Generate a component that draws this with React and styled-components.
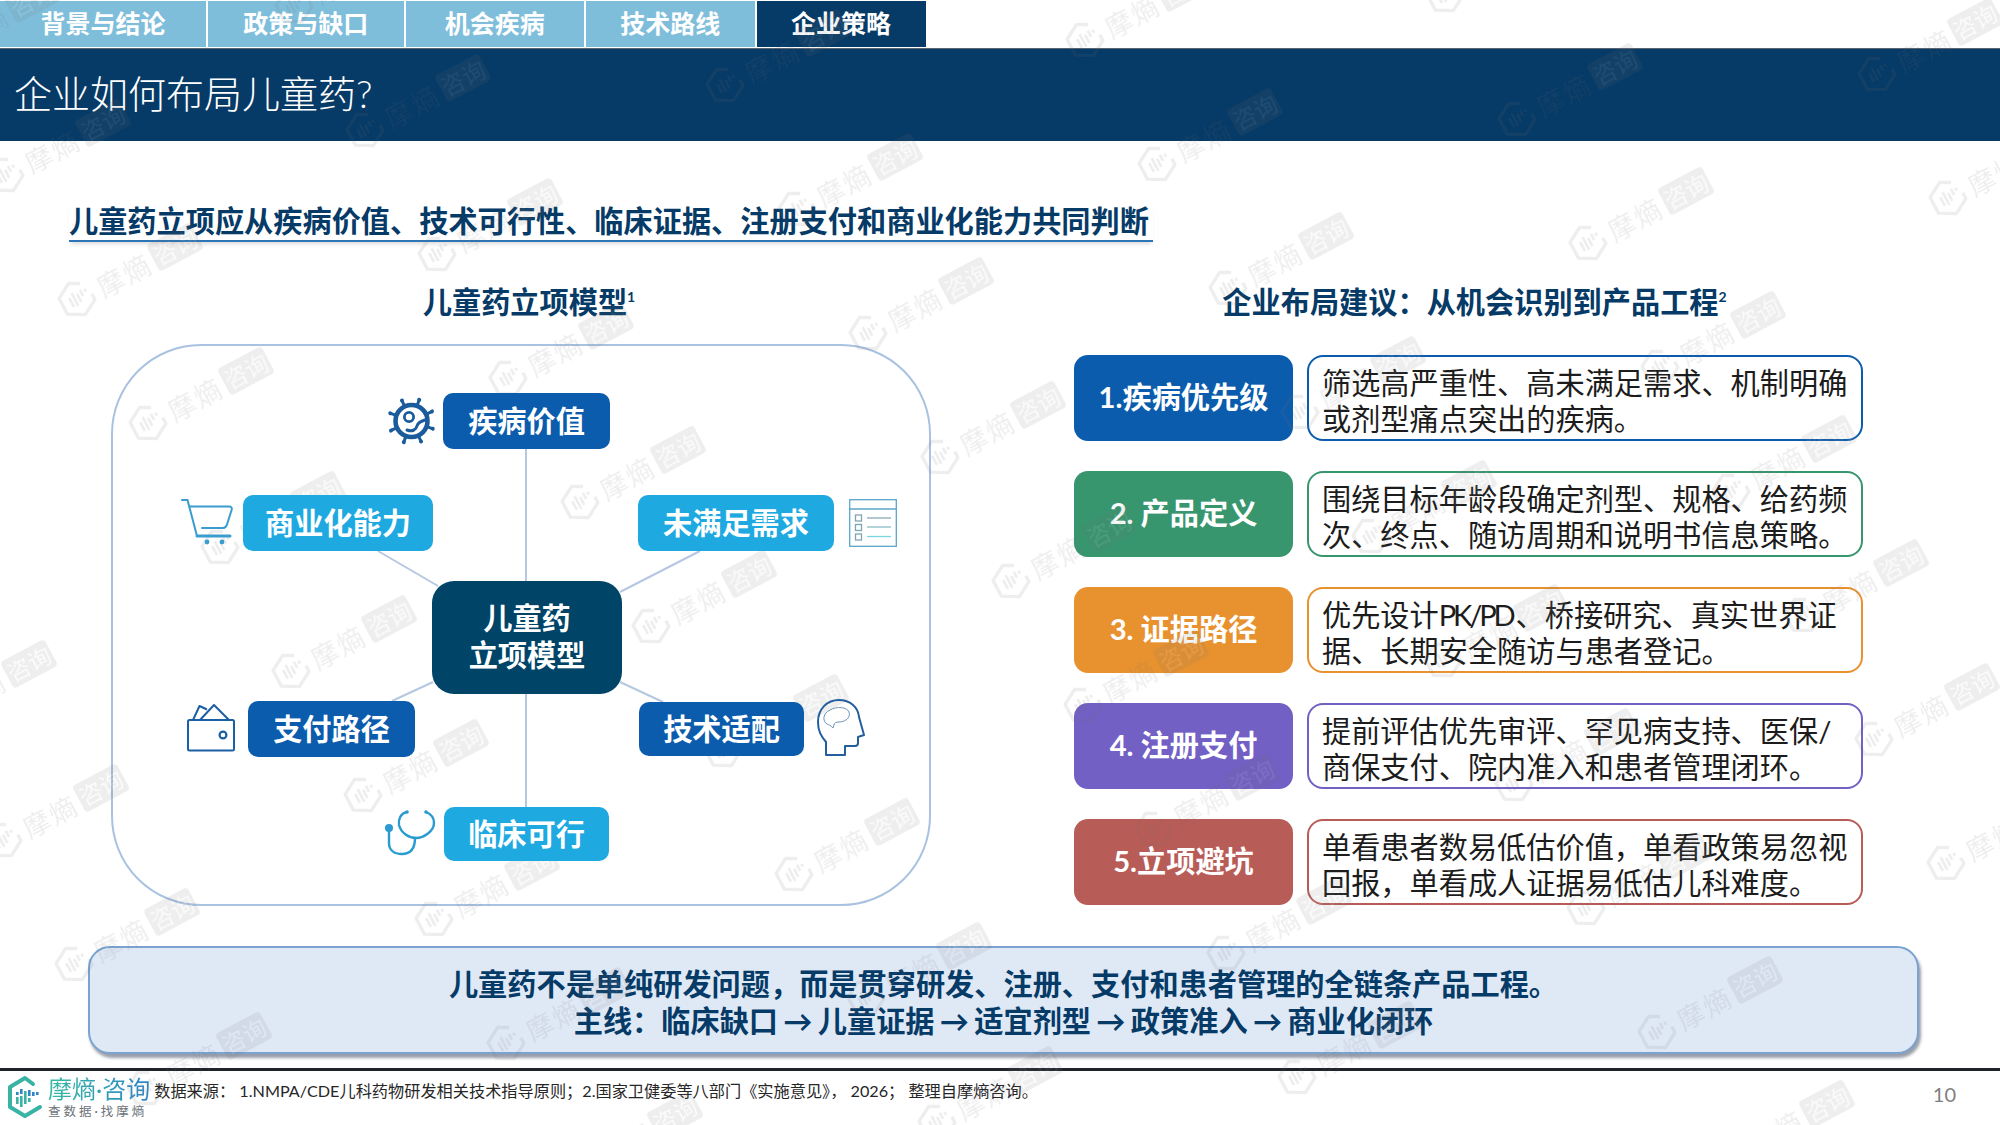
import React from "react";
import styled, { createGlobalStyle } from "styled-components";

const GlobalStyle = createGlobalStyle`
  html, body {
    margin: 0;
    padding: 0;
    background: #ffffff;
  }
  body {
    font-family: Lato, "Noto Sans CJK SC", sans-serif;
  }
`;

const navy = "#063a67";

const Page = styled.div`
  position: relative;
  width: 2000px;
  height: 1125px;
  overflow: hidden;
  background: #ffffff;
  display: flex;
  flex-direction: column;
`;

const TabBar = styled.nav`
  display: flex;
  gap: 1.5px;
  height: 46px;
  margin-top: 1px;
`;

const Tab = styled.div`
  width: ${(p) => p.$w}px;
  box-sizing: border-box;
  padding-bottom: 5px;
  display: flex;
  align-items: center;
  justify-content: center;
  font-size: 25px;
  font-weight: 700;
  color: #ffffff;
  background: ${(p) => (p.$active ? navy : "#7fbedb")};
`;

const TitleBar = styled.header`
  height: 93px;
  margin-top: 1px;
  padding: 0 0 8px 14px;
  display: flex;
  align-items: center;
  background: ${navy};
  border-top: 1px solid #5a6470;
  box-sizing: border-box;
  font-size: 38px;
  font-weight: 300;
  color: #ffffff;
`;

const Headline = styled.h1`
  align-self: flex-start;
  margin: 59px 0 0 69px;
  width: 1084px;
  height: 42px;
  line-height: 42px;
  box-sizing: border-box;
  border-bottom: 2px solid #2e75b6;
  box-shadow: 0 4px 4px -2px rgba(0, 0, 0, 0.14);
  font-size: 29.2px;
  font-weight: 700;
  color: ${navy};
  white-space: nowrap;
`;

const Columns = styled.section`
  display: flex;
  margin-top: 40px;
`;

const LeftColumn = styled.div`
  margin-left: 111px;
  width: 820px;
`;

const RightColumn = styled.div`
  margin-left: 143px;
  width: 789px;
`;

const ColumnTitle = styled.h2`
  margin: 0;
  height: 40px;
  line-height: 40px;
  padding-left: ${(p) => p.$shift}px;
  text-align: center;
  font-size: 29.2px;
  font-weight: 700;
  color: ${navy};
  white-space: nowrap;

  sup {
    font-size: 14px;
    line-height: 0;
    vertical-align: 11px;
  }
`;

const Panel = styled.div`
  position: relative;
  box-sizing: border-box;
  width: 820px;
  height: 562px;
  margin-top: 22px;
  border: 2px solid #a9c2e1;
  border-radius: 90px;
`;

const Links = styled.svg`
  position: absolute;
  left: 0;
  top: 0;
  width: 816px;
  height: 558px;
`;

const Node = styled.div`
  position: absolute;
  z-index: 2;
  left: ${(p) => p.$x}px;
  top: ${(p) => p.$y}px;
  width: ${(p) => p.$w}px;
  height: ${(p) => p.$h}px;
  box-sizing: border-box;
  padding-bottom: 4px;
  display: flex;
  align-items: center;
  justify-content: center;
  border-radius: 10px;
  background: ${(p) => p.$bg};
  color: #ffffff;
  font-size: 29.2px;
  font-weight: 700;
`;

const Hub = styled(Node)`
  border-radius: 22px;
  text-align: center;
  line-height: 37px;
`;

const IconSpot = styled.div`
  position: absolute;
  z-index: 2;
  left: ${(p) => p.$x}px;
  top: ${(p) => p.$y}px;
  line-height: 0;
`;

const Rows = styled.div`
  display: flex;
  flex-direction: column;
  gap: 30.5px;
  margin-top: 33px;
`;

const Row = styled.div`
  display: flex;
  gap: 14px;
  height: 85.5px;
`;

const Tag = styled.div`
  width: 219px;
  box-sizing: border-box;
  padding-bottom: 5px;
  display: flex;
  align-items: center;
  justify-content: center;
  border-radius: 14px;
  background: ${(p) => p.$c};
  color: #ffffff;
  font-size: 29.2px;
  font-weight: 700;
  white-space: nowrap;
`;

const Note = styled.div`
  flex: 1;
  box-sizing: border-box;
  padding: 6px 0 0 13px;
  display: flex;
  align-items: center;
  border: 2px solid ${(p) => p.$c};
  border-radius: 16px;
  font-size: 29.2px;
  line-height: 35.5px;
  color: #1c1c1c;
  white-space: nowrap;
`;

const Tight = styled.span`
  letter-spacing: -3.2px;
  margin-right: 3px;
`;

const Banner = styled.aside`
  box-sizing: border-box;
  width: 1831px;
  height: 108px;
  margin: 40px 0 0 88px;
  padding-top: 3px;
  display: flex;
  flex-direction: column;
  justify-content: center;
  border: 2px solid #7aa3d2;
  border-radius: 22px;
  background: #dfe9f6;
  box-shadow: 2px 4px 3px rgba(70, 80, 100, 0.55);
  text-align: center;
  font-size: 29.2px;
  line-height: 37px;
  font-weight: 700;
  color: ${navy};
  white-space: nowrap;
`;

const Route = styled.div`
  word-spacing: -1.8px;
`;

const Footer = styled.footer`
  flex: 1;
  margin-top: 14px;
  display: flex;
  border-top: 3px solid #20242a;
`;

const Logo = styled.div`
  display: flex;
  gap: 5px;
  margin: 4px 0 0 7px;
`;

const LogoWords = styled.div`
  display: flex;
  flex-direction: column;
`;

const LogoName = styled.div`
  font-size: 24px;
  line-height: 27px;
  background: linear-gradient(90deg, #37b9a3, #2f86c8);
  -webkit-background-clip: text;
  background-clip: text;
  color: transparent;
  white-space: nowrap;
`;

const LogoTag = styled.div`
  margin-top: 2px;
  font-size: 12.5px;
  line-height: 16px;
  letter-spacing: 3px;
  color: #6b7278;
  white-space: nowrap;
`;

const Source = styled.div`
  margin: 8px 0 0 4px;
  font-size: 16.2px;
  line-height: 24px;
  color: #262626;
  white-space: pre;
`;

const PageNo = styled.div`
  margin: 10px 0 0 auto;
  padding-right: 44px;
  font-size: 20px;
  line-height: 26px;
  color: #7f7f7f;
`;

const MarkLayer = styled.div`
  position: absolute;
  z-index: 1;
  inset: 0;
  overflow: hidden;
  pointer-events: none;
  opacity: 0.12;
`;

const Mark = styled.div`
  position: absolute;
  display: flex;
  align-items: center;
  gap: 4px;
  height: 40px;
  transform: rotate(-28deg);
  transform-origin: 20px 20px;
  color: #707070;
  white-space: nowrap;
`;

const MarkName = styled.span`
  font-size: 27px;
  letter-spacing: 2px;
`;

const MarkBox = styled.span`
  padding: 0 2px;
  border-radius: 4px;
  background: #707070;
  color: #d8d8d8;
  font-size: 23px;
  line-height: 30px;
`;

function HexMark({ size = 40, color = "currentColor" }) {
  return (
    <svg width={size} height={size} viewBox="0 0 36 36" fill="none">
      <path d="M27 7 18 2 4 10v16l14 8 14-8v-6" stroke={color} strokeWidth="3" strokeLinejoin="round" />
      <g fill={color}>
        <rect x="11" y="14" width="2.4" height="9" />
        <rect x="15" y="11" width="2.4" height="13" />
        <rect x="19" y="14" width="2.4" height="8" />
        <rect x="23" y="12" width="2.4" height="6" />
        <rect x="27" y="13" width="2.4" height="3" />
      </g>
    </svg>
  );
}

function LogoIcon() {
  return (
    <svg width="36" height="44" viewBox="0 0 36 44" fill="none">
      <path d="M26 9 18 3 3 12v20l15 9 15-9" stroke="#3bb3a4" strokeWidth="4" strokeLinejoin="round" strokeLinecap="round" />
      <g fill="#2f86c8">
        <rect x="9" y="17" width="2.6" height="3" />
        <rect x="13" y="14" width="2.6" height="5" />
        <rect x="21" y="15" width="2.6" height="6" />
        <rect x="25" y="17" width="2.6" height="4" />
        <rect x="29" y="17" width="2.6" height="3" />
      </g>
      <g fill="#3bb3a4">
        <rect x="9" y="22" width="2.6" height="7" />
        <rect x="13" y="21" width="2.6" height="11" />
        <rect x="17" y="16" width="2.6" height="13" />
        <rect x="21" y="23" width="2.6" height="4" />
      </g>
    </svg>
  );
}

function VirusIcon() {
  const spikes = [0, 45, 90, 135, 180, 225, 270, 315];
  return (
    <svg width="49" height="50" viewBox="0 0 49 50" fill="none" stroke="#1a5c9b">
      <circle cx="24.5" cy="25" r="16" strokeWidth="4.6" />
      {spikes.map((a) => (
        <g key={a} transform={`rotate(${a + 20} 24.5 25)`}>
          <path d="M24.5 8V2" strokeWidth="3" />
          <circle cx="24.5" cy="2.4" r="2" fill="#1a5c9b" stroke="none" />
        </g>
      ))}
      <circle cx="22" cy="21" r="4.6" strokeWidth="2.8" />
      <path d="M20 34c5 2 9 0 10-4s5-5 8-6" strokeWidth="3" strokeLinecap="round" />
    </svg>
  );
}

function CartIcon() {
  return (
    <svg width="52" height="47" viewBox="0 0 52 47" fill="none" stroke="#3a9ccf" strokeLinecap="round">
      <path d="M1 1h5.500L16 37h33" strokeWidth="2" />
      <path d="M16 37h33" strokeWidth="3" />
      <path d="M9 7.500h39c2.500 0 3.200 1.500 2.600 3.500L46 25.500c-.6 2-2 3.500-4 3.500H21" strokeWidth="2" />
      <circle cx="26" cy="43" r="2.400" fill="#3a9ccf" stroke="none" />
      <circle cx="41" cy="43" r="2.400" fill="#3a9ccf" stroke="none" />
    </svg>
  );
}

function ListIcon() {
  return (
    <svg width="48" height="48" viewBox="0 0 48 48" fill="none" stroke="#5ba6c9" strokeWidth="1.300">
      <rect x=".7" y=".7" width="46.600" height="46.600" />
      <path d="M.7 10h46.600" />
      <rect x="6.500" y="16" width="6" height="6" stroke="#7fa5b3" />
      <rect x="6.500" y="25.500" width="6" height="6" stroke="#7fa5b3" />
      <rect x="6.500" y="35" width="6" height="6" stroke="#7fa5b3" />
      <path d="M18 19h24" stroke="#8aa9b8" />
      <path d="M18 28h24" stroke="#8abdc8" />
      <path d="M18 37.500h24" stroke="#78d6e4" />
    </svg>
  );
}

function WalletIcon() {
  return (
    <svg width="48" height="48" viewBox="0 0 48 48" fill="none" stroke="#1c5fa5" strokeWidth="2" strokeLinejoin="round">
      <rect x="1" y="16" width="46" height="30.500" rx="1.500" />
      <circle cx="36" cy="31" r="3.400" strokeWidth="2.200" />
      <path d="M6 16 12.500 2 20 5.500" />
      <path d="M13 16 27 1l15 15" />
    </svg>
  );
}

function HeadIcon() {
  return (
    <svg width="48" height="58" viewBox="0 0 48 58" fill="none" stroke="#235f9e" strokeWidth="2" strokeLinejoin="round">
      <path d="M9 56V43C4 37 1 32 1 23 1 10 10 1 22 1c11 0 19 7 20 17l5 18-6 2v6c0 2-1 3-3 3H28v9Z" />
      <path
        d="M10 25c-5-3-4-11 3-14 7-4 17-3 19 2 2 6-4 10-10 10-3 0-5 1-5 3l-1 3c-1-2-4-3-6-4Z"
        stroke="#6f93b8"
        strokeWidth="1"
      />
    </svg>
  );
}

function StethoscopeIcon() {
  return (
    <svg width="52" height="46" viewBox="0 0 52 46" fill="none" stroke="#2a9bd0" strokeWidth="2.400" strokeLinecap="round">
      <path d="M23 2c-6 1-9 7-8 13 2 8 10 13 17 13 8 0 18-7 18-15 0-5-3-9-8-11" />
      <path d="M5 18v15c0 7 5 11 13 11s13-5 13-16" />
      <circle cx="5" cy="18" r="4" fill="#2a9bd0" stroke="none" />
      <circle cx="23" cy="2" r="1.800" fill="#2a9bd0" stroke="none" />
      <circle cx="42" cy="2" r="1.800" fill="#2a9bd0" stroke="none" />
    </svg>
  );
}

const tabs = [
  { text: "背景与结论", w: 206 },
  { text: "政策与缺口", w: 196.500 },
  { text: "机会疾病", w: 178.500 },
  { text: "技术路线", w: 169.500 },
  { text: "企业策略", w: 169, active: true },
];

const blue = "#0b5cad";
const sky = "#1fa9e1";

const nodes = [
  { text: "疾病价值", x: 330, y: 47, w: 167, h: 56, bg: blue },
  { text: "商业化能力", x: 130, y: 149, w: 190, h: 56, bg: sky },
  { text: "未满足需求", x: 525, y: 149, w: 196, h: 56, bg: sky },
  { text: "支付路径", x: 135, y: 355, w: 167, h: 56, bg: blue },
  { text: "技术适配", x: 526, y: 356, w: 165, h: 54, bg: blue },
  { text: "临床可行", x: 331, y: 461, w: 165, h: 54, bg: sky },
];

const icons = [
  { Icon: VirusIcon, x: 274, y: 50 },
  { Icon: CartIcon, x: 68, y: 153 },
  { Icon: ListIcon, x: 736, y: 153 },
  { Icon: WalletIcon, x: 74, y: 358 },
  { Icon: HeadIcon, x: 704, y: 353 },
  { Icon: StethoscopeIcon, x: 271, y: 464 },
];

const links = [
  [413, 103, 413, 235],
  [413, 348, 413, 461],
  [265, 205, 325, 240],
  [587, 205, 507, 246],
  [279, 355, 320, 336],
  [507, 336, 550, 356],
];

const steps = [
  { tag: "1.疾病优先级", c: "#0b5cad", lines: ["筛选高严重性、高未满足需求、机制明确", "或剂型痛点突出的疾病。"] },
  { tag: "2. 产品定义", c: "#38966f", lines: ["围绕目标年龄段确定剂型、规格、给药频", "次、终点、随访周期和说明书信息策略。"] },
  {
    tag: "3. 证据路径",
    c: "#e8922f",
    lines: [
      <>
        优先设计<Tight>PK/PD</Tight>、桥接研究、真实世界证
      </>,
      "据、长期安全随访与患者登记。",
    ],
  },
  { tag: "4. 注册支付", c: "#7360c4", lines: ["提前评估优先审评、罕见病支持、医保/", "商保支付、院内准入和患者管理闭环。"] },
  { tag: "5.立项避坑", c: "#b85c57", lines: ["单看患者数易低估价值，单看政策易忽视", "回报，单看成人证据易低估儿科难度。"] },
];

// watermark sits on a skewed lattice
const marks = [];
for (let i = -4; i < 8; i++) {
  for (let j = -3; j < 13; j++) {
    const x = 148 + i * 360 + j * 71.5;
    const y = 423 - i * 45 + j * 124;
    if (x > -160 && x < 2010 && y > -10 && y < 1190) marks.push({ x, y });
  }
}

export default function App() {
  return (
    <Page>
      <GlobalStyle />
      <TabBar>
        {tabs.map((t) => (
          <Tab key={t.text} $w={t.w} $active={t.active}>
            {t.text}
          </Tab>
        ))}
      </TabBar>
      <TitleBar>企业如何布局儿童药?</TitleBar>
      <Headline>儿童药立项应从疾病价值、技术可行性、临床证据、注册支付和商业化能力共同判断</Headline>

      <Columns>
        <LeftColumn>
          <ColumnTitle $shift={16}>
            儿童药立项模型<sup>1</sup>
          </ColumnTitle>
          <Panel>
            <Links viewBox="0 0 816 558" fill="none" stroke="#b5c8e1" strokeWidth="2">
              {links.map((l) => (
                <line key={l.join()} x1={l[0]} y1={l[1]} x2={l[2]} y2={l[3]} />
              ))}
            </Links>
            {nodes.map((n) => (
              <Node key={n.text} $x={n.x} $y={n.y} $w={n.w} $h={n.h} $bg={n.bg}>
                {n.text}
              </Node>
            ))}
            <Hub $x={319} $y={235} $w={190} $h={113} $bg="#004468">
              儿童药
              <br />
              立项模型
            </Hub>
            {icons.map(({ Icon, x, y }) => (
              <IconSpot key={`${x}-${y}`} $x={x} $y={y}>
                <Icon />
              </IconSpot>
            ))}
          </Panel>
        </LeftColumn>

        <RightColumn>
          <ColumnTitle $shift={12}>
            企业布局建议：从机会识别到产品工程<sup>2</sup>
          </ColumnTitle>
          <Rows>
            {steps.map((s) => (
              <Row key={s.tag}>
                <Tag $c={s.c}>{s.tag}</Tag>
                <Note $c={s.c}>
                  <div>
                    {s.lines[0]}
                    <br />
                    {s.lines[1]}
                  </div>
                </Note>
              </Row>
            ))}
          </Rows>
        </RightColumn>
      </Columns>

      <Banner>
        <div>儿童药不是单纯研发问题，而是贯穿研发、注册、支付和患者管理的全链条产品工程。</div>
        <Route>主线：临床缺口 → 儿童证据 → 适宜剂型 → 政策准入 → 商业化闭环</Route>
      </Banner>

      <Footer>
        <Logo>
          <LogoIcon />
          <LogoWords>
            <LogoName>摩熵·咨询</LogoName>
            <LogoTag>查数据·找摩熵</LogoTag>
          </LogoWords>
        </Logo>
        <Source>数据来源： 1.NMPA/CDE儿科药物研发相关技术指导原则；2.国家卫健委等八部门《实施意见》， 2026； 整理自摩熵咨询。</Source>
        <PageNo>10</PageNo>
      </Footer>

      <MarkLayer>
        {marks.map((m) => (
          <Mark key={`${m.x}-${m.y}`} style={{ left: m.x - 20, top: m.y - 20 }}>
            <HexMark />
            <MarkName>摩熵</MarkName>
            <MarkBox>咨询</MarkBox>
          </Mark>
        ))}
      </MarkLayer>
    </Page>
  );
}
